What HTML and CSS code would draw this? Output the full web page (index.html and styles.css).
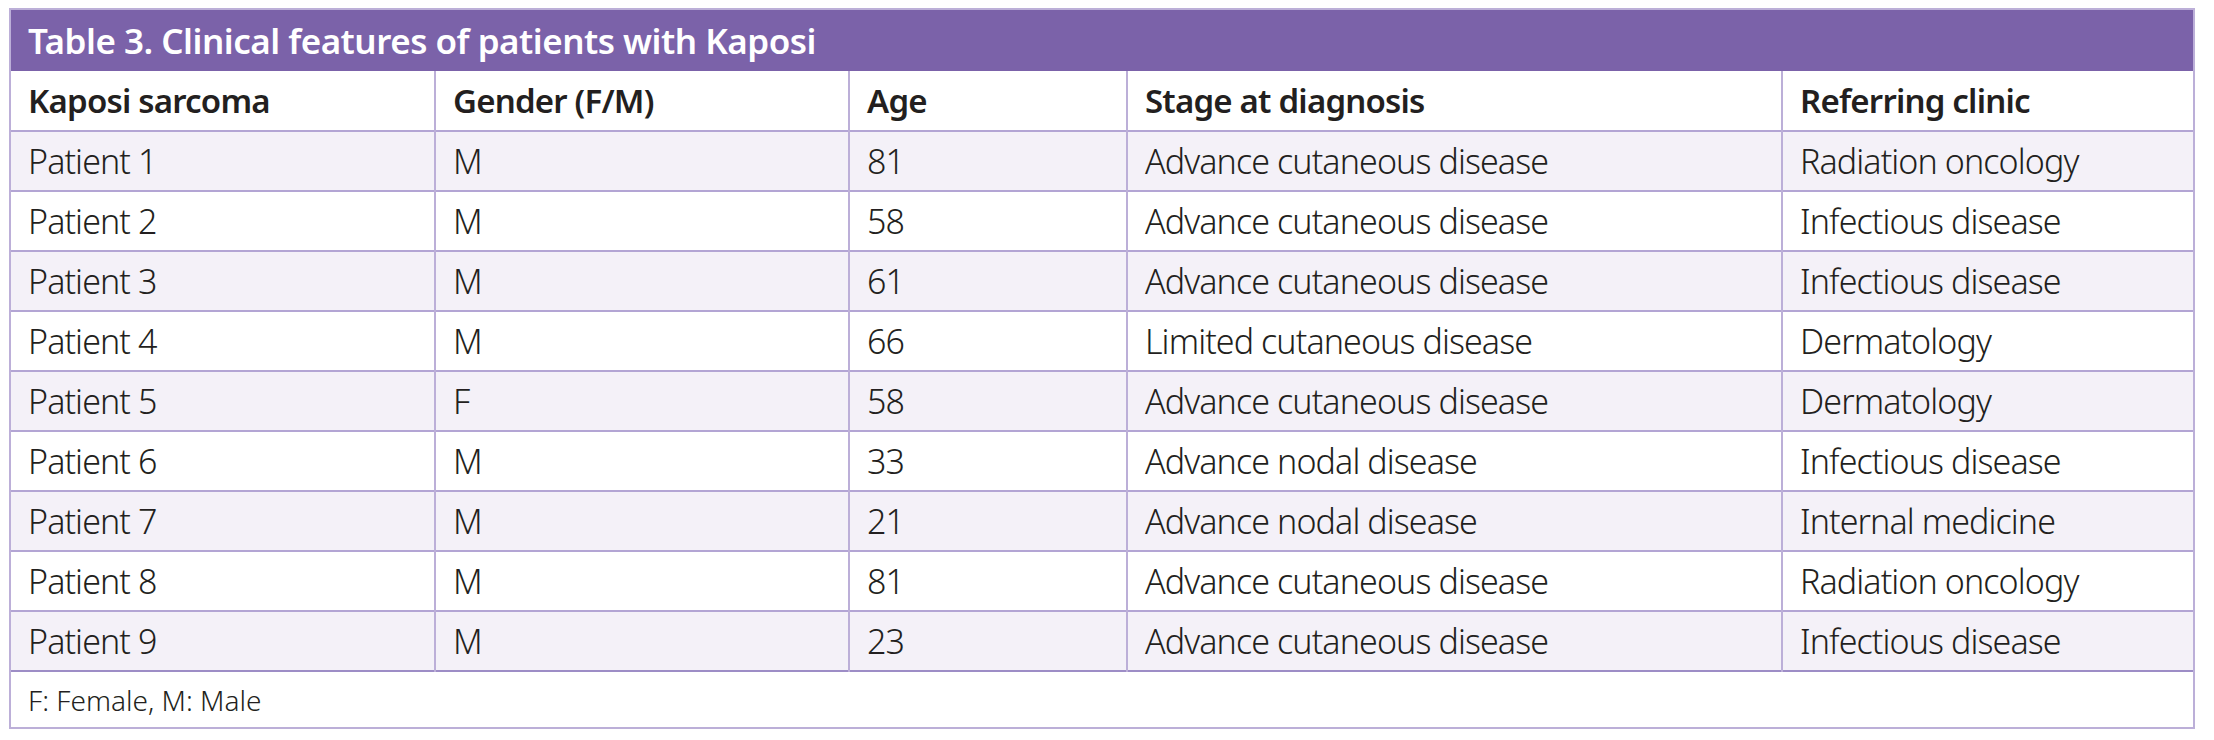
FILE: index.html
```html
<!DOCTYPE html>
<html lang="en">
<head>
<meta charset="utf-8">
<title>Table 3</title>
<link rel="stylesheet" href="styles.css">
</head>
<body>
<div class="card">
  <div class="title">Table 3. Clinical features of patients with Kaposi</div>
  <table class="data">
    <colgroup>
      <col class="c1"><col class="c2"><col class="c3"><col class="c4"><col class="c5">
    </colgroup>
    <thead>
      <tr><th>Kaposi sarcoma</th><th>Gender (F/M)</th><th>Age</th><th>Stage at diagnosis</th><th>Referring clinic</th></tr>
    </thead>
    <tbody>
      <tr><td>Patient 1</td><td>M</td><td>81</td><td>Advance cutaneous disease</td><td>Radiation oncology</td></tr>
      <tr><td>Patient 2</td><td>M</td><td>58</td><td>Advance cutaneous disease</td><td>Infectious disease</td></tr>
      <tr><td>Patient 3</td><td>M</td><td>61</td><td>Advance cutaneous disease</td><td>Infectious disease</td></tr>
      <tr><td>Patient 4</td><td>M</td><td>66</td><td>Limited cutaneous disease</td><td>Dermatology</td></tr>
      <tr><td>Patient 5</td><td>F</td><td>58</td><td>Advance cutaneous disease</td><td>Dermatology</td></tr>
      <tr><td>Patient 6</td><td>M</td><td>33</td><td>Advance nodal disease</td><td>Infectious disease</td></tr>
      <tr><td>Patient 7</td><td>M</td><td>21</td><td>Advance nodal disease</td><td>Internal medicine</td></tr>
      <tr><td>Patient 8</td><td>M</td><td>81</td><td>Advance cutaneous disease</td><td>Radiation oncology</td></tr>
      <tr><td>Patient 9</td><td>M</td><td>23</td><td>Advance cutaneous disease</td><td>Infectious disease</td></tr>
    </tbody>
    <tfoot>
      <tr><td colspan="5">F: Female, M: Male</td></tr>
    </tfoot>
  </table>
</div>
</body>
</html>
```
FILE: styles.css
```css
html, body {
  margin: 0;
  padding: 0;
  background: #ffffff;
}

body {
  padding: 8px 0 0 9px;
  font-family: "Noto Sans", "Liberation Sans", sans-serif;
  color: #231f20;
}

.card {
  width: 2186px;
  border: 2px solid #bcafd8;
  box-sizing: border-box;
}

.title {
  background: #7b62a9;
  color: #ffffff;
  height: 61px;
  display: flex;
  align-items: center;
  padding-left: 17px;
  font-size: 35px;
  font-weight: 600;
  letter-spacing: -0.5px;
}

.data {
  width: 100%;
  border-collapse: collapse;
  table-layout: fixed;
  font-size: 34px;
  font-weight: 300;
  letter-spacing: -0.9px;
}

.c1 { width: 424px; }
.c2 { width: 414px; }
.c3 { width: 278px; }
.c4 { width: 655px; }
.c5 { width: auto; }

.data th,
.data td {
  text-align: left;
  padding: 0 17px;
  height: 60px;
  box-sizing: border-box;
  border-left: 2px solid #bcafd8;
  border-top: 2px solid #b3a5d4;
  vertical-align: middle;
  white-space: nowrap;
}

.data th:first-child,
.data td:first-child {
  border-left: none;
}

.data thead th {
  border-top: none;
  font-size: 33px;
  font-weight: 600;
  letter-spacing: -0.8px;
  background: #ffffff;
}

.data tbody tr:nth-child(odd) td {
  background: #f4f1f8;
}

.data tfoot td {
  height: 56px;
  font-size: 28px;
  letter-spacing: 0;
  border-left: none;
  border-top: 2px solid #9d8dc6;
}
```
